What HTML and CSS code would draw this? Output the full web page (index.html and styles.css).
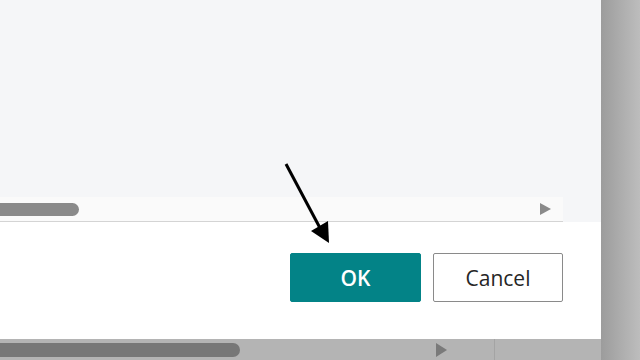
FILE: index.html
```html
<!DOCTYPE html>
<html lang="en">

<head>
    <meta charset="UTF-8">
    <meta name="viewport" content="width=device-width, initial-scale=1.0">
    <title>Dialog</title>
    <link rel="stylesheet" href="styles.css">
</head>

<body>
    <div class="screen">
        <div class="main">
            <div class="dialog">
                <div class="dialog-body"></div>
                <div class="scroll-row">
                    <div class="hscroll">
                        <div class="thumb"></div>
                        <div class="arrow"></div>
                    </div>
                </div>
                <div class="dialog-footer">
                    <button class="btn btn-ok">OK</button>
                    <button class="btn btn-cancel">Cancel</button>
                </div>
            </div>
            <div class="back-scroll">
                <div class="back-thumb"></div>
                <div class="back-arrow"></div>
                <div class="back-sep"></div>
            </div>
        </div>
        <div class="side"></div>

        <!-- annotation arrow pointing at OK -->
        <svg class="pointer" width="640" height="360" viewBox="0 0 640 360">
            <line x1="286" y1="164" x2="320" y2="228" stroke="#000" stroke-width="3" />
            <polygon points="329,243 311,231 328,221" fill="#000" />
        </svg>
    </div>
</body>

</html>
```

FILE: styles.css
```css
html, body {
    margin: 0;
    padding: 0;
}

body {
    font-family: "Open Sans", "Noto Sans", sans-serif;
}

.screen {
    position: relative;
    width: 640px;
    height: 360px;
    display: flex;
    overflow: hidden;
    background: #b4b4b4;
}

.main {
    width: 601px;
    display: flex;
    flex-direction: column;
}

.dialog {
    height: 339px;
    background: #fff;
    display: flex;
    flex-direction: column;
}

.dialog-body {
    height: 197px;
    background: #f5f6f8;
}

.scroll-row {
    height: 25px;
    background: #f5f6f8;
}

.hscroll {
    width: 563px;
    height: 24px;
    background: #fafafa;
    border-bottom: 1px solid #d4d4d4;
    display: flex;
    align-items: center;
    justify-content: space-between;
}

.thumb {
    width: 79px;
    height: 13px;
    background: #8a8a8a;
    border-radius: 0 7px 7px 0;
}

.arrow {
    width: 0;
    height: 0;
    margin-right: 12px;
    border-top: 6px solid transparent;
    border-bottom: 6px solid transparent;
    border-left: 11px solid #8a8a8a;
}

.dialog-footer {
    flex: 1;
    display: flex;
    justify-content: flex-end;
    align-items: flex-start;
    gap: 12px;
    padding: 31px 38px 0 0;
}

.btn {
    height: 49px;
    border-radius: 2px;
    font-family: "Open Sans", "Noto Sans", sans-serif;
    font-size: 21px;
    padding: 0;
}

.btn-ok {
    width: 131px;
    background: #038387;
    border: 1px solid #038387;
    color: #fff;
    font-weight: 600;
}

.btn-cancel {
    width: 130px;
    background: #fff;
    border: 1px solid #8a8a8a;
    color: #262626;
}

.back-scroll {
    flex: 1;
    position: relative;
    display: flex;
    align-items: center;
}

.back-thumb {
    width: 240px;
    height: 14px;
    background: #777;
    border-radius: 0 7px 7px 0;
}

.back-arrow {
    width: 0;
    height: 0;
    margin-left: 196px;
    border-top: 7px solid transparent;
    border-bottom: 7px solid transparent;
    border-left: 11px solid #7a7a7a;
}

.back-sep {
    width: 1px;
    align-self: stretch;
    margin-left: 47px;
    background: #a4a4a4;
}

.side {
    flex: 1;
    background: linear-gradient(to right, #9c9c9c, #bdbdbd);
}

.pointer {
    position: absolute;
    left: 0;
    top: 0;
}
```
